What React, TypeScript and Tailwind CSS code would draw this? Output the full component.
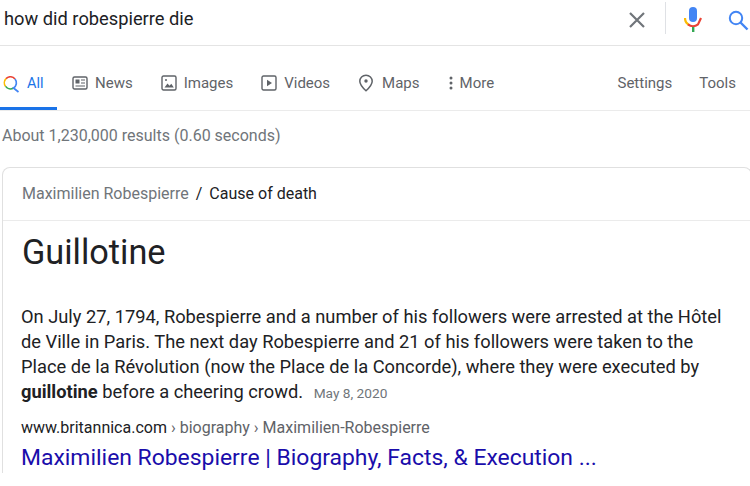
function Tab({ icon, label, className }: { icon: React.ReactNode; label: string; className: string }) {
  return (
    <div className={"flex items-center text-[15px] text-[#5f6368] " + className}>
      {icon}
      <span>{label}</span>
    </div>
  );
}

const G = "#5f6368";

export default function App() {
  return (
    <div className="w-[750px] h-[486px] overflow-hidden bg-white font-['Roboto',sans-serif]">
      <header className="h-[46px] flex items-center border-b border-[#e4e4e4]">
        <div className="pl-[4px] pb-[7px] flex-1 text-[18.3px] text-[#202124]">how did robespierre die</div>
        <svg width="18" height="18" viewBox="0 0 18 18" className="mb-[5px] mr-[19px]">
          <path d="M2 2 L16 16 M16 2 L2 16" stroke="#70757a" strokeWidth="2.2" fill="none" />
        </svg>
        <div className="w-px h-[32px] mb-[10px] bg-[#dfe1e5] mr-[18px]" />
        <svg width="18" height="26" viewBox="0 0 18 26" className="mb-[7px] mr-[26px]">
          <rect x="5" y="1" width="8" height="15" rx="4" fill="#4285f4" />
          <path d="M1 12 A8 8 0 0 0 5 19" stroke="#fbbc04" strokeWidth="2.2" fill="none" />
          <path d="M4 18.4 A8 8 0 0 0 14 18.4 L17 12" stroke="#ea4335" strokeWidth="2.2" fill="none" />
          <rect x="8" y="21" width="2.4" height="5" fill="#34a853" />
        </svg>
        <svg width="21" height="21" viewBox="0 0 21 21" className="mb-[5px] mr-[1px] shrink-0">
          <circle cx="8" cy="8" r="6.2" stroke="#4285f4" strokeWidth="2" fill="none" />
          <path d="M12.5 12.5 L19.5 19.5" stroke="#4285f4" strokeWidth="2.4" />
        </svg>
      </header>

      <nav className="h-[65px] flex items-center border-b border-[#ebebeb] pt-[10px]">
        <div className="flex items-center w-[57px] self-stretch relative pl-[3px] pt-[2px] text-[14.5px] text-[#1a73e8]">
          <svg width="17" height="17" viewBox="0 0 17 17" className="mr-[7px]">
            <path d="M12 3 A6 6 0 0 0 3 2.6" stroke="#ea4335" strokeWidth="1.6" fill="none" />
            <path d="M3 2.6 A6 6 0 0 0 2.6 10.4" stroke="#fbbc04" strokeWidth="1.6" fill="none" />
            <path d="M2.6 10.4 A6 6 0 0 0 10.5 12" stroke="#34a853" strokeWidth="1.6" fill="none" />
            <path d="M12 3 A6 6 0 0 1 10.5 12 L15.5 16" stroke="#4285f4" strokeWidth="1.7" fill="none" />
          </svg>
          <span>All</span>
          <div className="absolute left-0 right-0 bottom-0 h-[3px] bg-[#1a73e8]" />
        </div>
        <Tab
          className="ml-[15px]"
          label="News"
          icon={
            <svg width="16" height="16" viewBox="0 0 16 16" className="mr-[7px]">
              <rect x="1" y="2" width="14" height="12" rx="1.5" stroke={G} strokeWidth="1.4" fill="none" />
              <rect x="3.5" y="4.5" width="4" height="4" fill={G} />
              <path d="M9 5h4M9 8h4M3.5 11h9.5" stroke={G} strokeWidth="1.2" />
            </svg>
          }
        />
        <Tab
          className="ml-[28px]"
          label="Images"
          icon={
            <svg width="16" height="16" viewBox="0 0 16 16" className="mr-[7px]">
              <rect x="1" y="1" width="14" height="14" rx="1.5" stroke={G} strokeWidth="1.4" fill="none" />
              <path d="M3.5 12.5 L6.5 8.5 L8.5 10.8 L10.3 8.8 L12.8 12.5 Z" fill={G} />
              <circle cx="5" cy="5" r="1" fill={G} />
            </svg>
          }
        />
        <Tab
          className="ml-[28px]"
          label="Videos"
          icon={
            <svg width="16" height="16" viewBox="0 0 16 16" className="mr-[7px]">
              <rect x="1" y="1" width="14" height="14" rx="1.5" stroke={G} strokeWidth="1.4" fill="none" />
              <path d="M6 4.8 L11 8 L6 11.2 Z" fill={G} />
            </svg>
          }
        />
        <Tab
          className="ml-[28px]"
          label="Maps"
          icon={
            <svg width="16" height="18" viewBox="0 0 16 18" className="mr-[8px]">
              <path d="M8 1.2 C4.4 1.2 1.8 3.9 1.8 7.2 C1.8 11 8 16.8 8 16.8 C8 16.8 14.2 11 14.2 7.2 C14.2 3.9 11.6 1.2 8 1.2 Z" stroke={G} strokeWidth="1.5" fill="none" />
              <circle cx="8" cy="7" r="1.7" fill={G} />
            </svg>
          }
        />
        <Tab
          className="ml-[29px]"
          label="More"
          icon={
            <svg width="4" height="14" viewBox="0 0 4 14" className="mr-[7px]">
              <circle cx="2" cy="2" r="1.5" fill={G} />
              <circle cx="2" cy="7" r="1.5" fill={G} />
              <circle cx="2" cy="12" r="1.5" fill={G} />
            </svg>
          }
        />
        <div className="flex-1" />
        <div className="text-[15px] text-[#5f6368] mr-[27px]">Settings</div>
        <div className="text-[15px] text-[#5f6368] mr-[14px]">Tools</div>
      </nav>

      <div className="pl-[2px] pt-[15px] pb-[21px] text-[16px] leading-[20px] text-[#70757a]">About 1,230,000 results (0.60 seconds)</div>

      <section className="ml-[2px] -mr-[2px] border border-[#e0e0e0] border-b-0 rounded-t-[8px]">
        <div className="h-[53px] border-b border-[#ebebeb] flex items-center pl-[19px] text-[16px]">
          <span className="text-[#70757a]">Maximilien Robespierre</span>
          <span className="mx-[7px] text-[#202124]">/</span>
          <span className="text-[#202124]">Cause of death</span>
        </div>
        <div className="pl-[18px]">
          <h1 className="pl-[1px] pt-[11px] text-[34.3px] leading-[40px] text-[#202124]">Guillotine</h1>
          <p className="mt-[32px] w-[712px] text-[18.3px] leading-[25px] text-[#202124]">
            On July 27, 1794, Robespierre and a number of his followers were arrested at the Hôtel de Ville in Paris. The next day Robespierre and 21 of his followers were taken to the Place de la Révolution (now the Place de la Concorde), where they were executed by <b>guillotine</b> before a cheering crowd.{" "}
            <span className="ml-[6px] text-[13.7px] text-[#70757a]">May 8, 2020</span>
          </p>
          <div className="mt-[12px] text-[16px] leading-[20px] text-[#202124]">
            www.britannica.com<span className="text-[#5f6368]"> › biography › Maximilien-Robespierre</span>
          </div>
          <div className="mt-[5px] text-[22.9px] leading-[30px] text-[#1a0dab] whitespace-nowrap">Maximilien Robespierre | Biography, Facts, &amp; Execution ...</div>
        </div>
      </section>
    </div>
  );
}
